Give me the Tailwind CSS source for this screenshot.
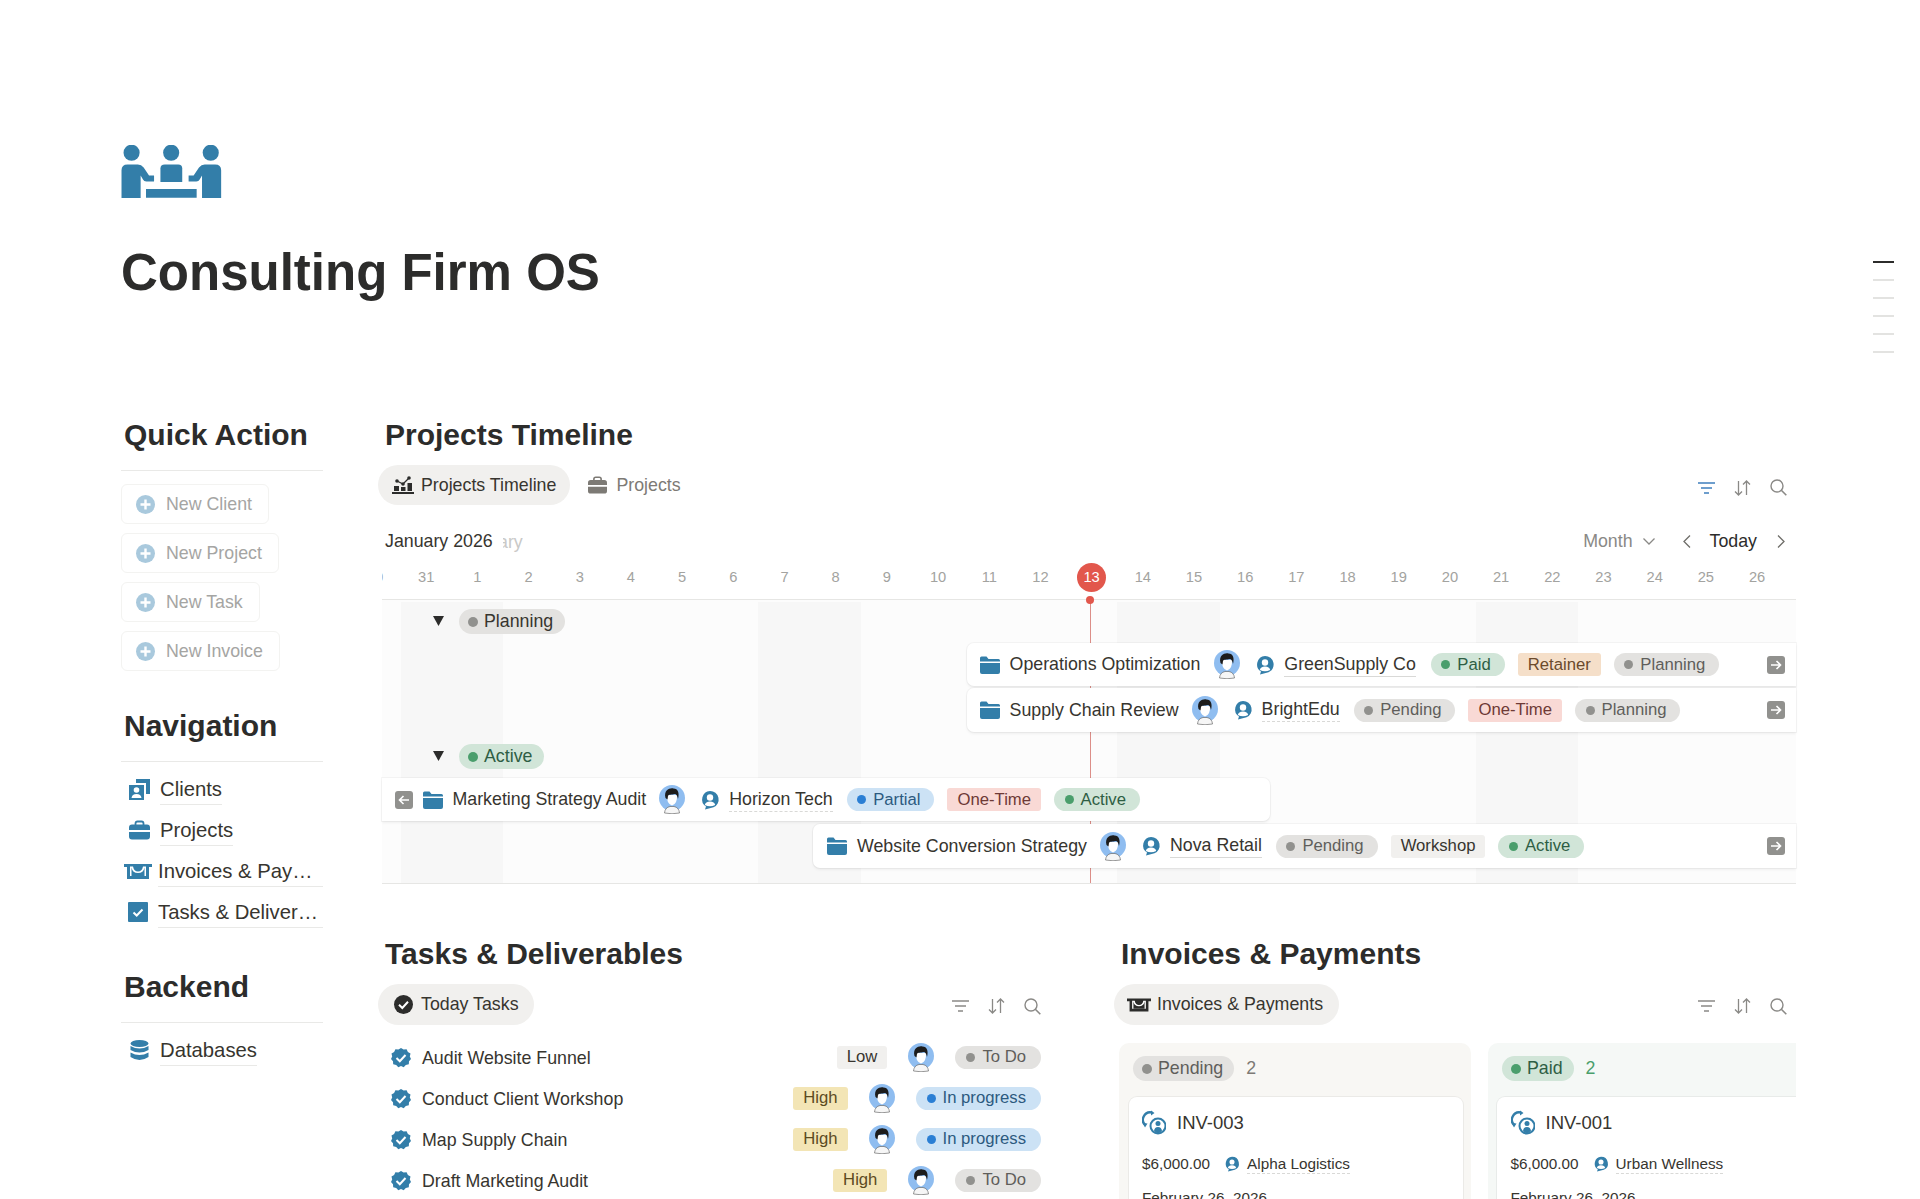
<!DOCTYPE html>
<html lang="en">
<head>
    <meta charset="utf-8">
    <title>Consulting Firm OS</title>
    <script src="https://cdn.jsdelivr.net/npm/@tailwindcss/browser@4"></script>
</head>
<body class="w-[1920px] h-[1199px] overflow-hidden relative bg-white text-[#2c2c2b] font-['Liberation_Sans',Arial,sans-serif]">
    <!-- shared icons -->
    <svg class="hidden">
        <defs>
            <symbol id="avatar" viewBox="0 0 26 29">
                <circle cx="13" cy="13" r="13" fill="#8fbdf0"/>
                <path d="M8 10 Q7.500 19 13 20.500 Q18.500 19 18 10Z" fill="#fff"/>
                <path d="M6.500 13 C4.500 5 11 2.500 14.500 3.500 C19 3.500 20.500 8 19 14 C18.500 11 17.500 9 15.500 9 C12.500 10 9.500 9 9 11 L8.500 14.500 Z" fill="#1c1c1c"/>
                <path d="M5.500 28 Q6 22.500 11 21.500 L15 21.500 Q20 22.500 20.500 28 Q13 29.500 5.500 28Z" fill="#f6f6f6" stroke="#555" stroke-width=".6"/>
            </symbol>
            <symbol id="person" viewBox="0 0 20 20">
                <path d="M10 1 A8.500 8.500 0 0 1 13.500 17.300 L5 19.500 L6 16.600 A8.500 8.500 0 0 1 10 1Z" fill="currentColor"/>
                <circle cx="10" cy="7.500" r="3.200" fill="#fff"/>
                <path d="M4.800 15 Q5.500 11.500 10 11.500 Q14.500 11.500 15.200 15 Q10 17.500 4.800 15Z" fill="#fff"/>
            </symbol>
            <symbol id="folder" viewBox="0 0 20 18">
                <path d="M0 2 Q0 .500 1.500 .500 H6.500 L8.500 3 H18.500 Q20 3 20 4.500 V5.500 H0Z" fill="currentColor"/>
                <path d="M0 7 H20 V16 Q20 18 18 18 H2 Q0 18 0 16Z" fill="currentColor"/>
            </symbol>
            <symbol id="arrow-right" viewBox="0 0 18 18">
                <rect width="18" height="18" rx="3" fill="#91918e"/>
                <path d="M4 9 H13 M9.500 5 L13.500 9 L9.500 13" fill="none" stroke="#fff" stroke-width="1.600"/>
            </symbol>
            <symbol id="arrow-left" viewBox="0 0 18 18">
                <rect width="18" height="18" rx="3" fill="#91918e"/>
                <path d="M14 9 H5 M8.500 5 L4.500 9 L8.500 13" fill="none" stroke="#fff" stroke-width="1.600"/>
            </symbol>
            <symbol id="filter" viewBox="0 0 17 12">
                <path d="M0 1 H17 M3 6 H14 M6 11 H11" fill="none" stroke="currentColor" stroke-width="1.600"/>
            </symbol>
            <symbol id="sort" viewBox="0 0 17 16">
                <path d="M4.500 1 V15 M1 11.500 L4.500 15 L8 11.500 M12.500 15 V1 M9 4.500 L12.500 1 L16 4.500" fill="none" stroke="currentColor" stroke-width="1.300"/>
            </symbol>
            <symbol id="search" viewBox="0 0 17 17">
                <circle cx="7" cy="7" r="6" fill="none" stroke="currentColor" stroke-width="1.400"/>
                <path d="M11.300 11.300 L16.300 16.300" stroke="currentColor" stroke-width="1.600"/>
            </symbol>
            <symbol id="plus" viewBox="0 0 19 19">
                <circle cx="9.500" cy="9.500" r="9.500" fill="#a9c9dd"/>
                <path d="M9.500 4.500 V14.500 M4.500 9.500 H14.500" stroke="#fff" stroke-width="2.400"/>
            </symbol>
            <symbol id="briefcase" viewBox="0 0 21 19">
                <path d="M6.500 5 V3 Q6.500 1 8.500 1 H12.500 Q14.500 1 14.500 3 V5" fill="none" stroke="currentColor" stroke-width="1.800"/>
                <path d="M0 7 Q0 4 3 4 H18 Q21 4 21 7 V9.500 H0Z M0 11.500 H21 V16 Q21 19 18 19 H3 Q0 19 0 16Z" fill="currentColor"/>
            </symbol>
            <symbol id="badge" viewBox="0 0 20 20">
                <path d="M10 0 L12.600 1.600 L15.600 1.300 L16.900 4 L19.500 5.500 L18.800 8.500 L20 11 L18 13.300 L17.800 16.300 L14.800 16.900 L12.700 19.200 L10 18 L7.300 19.200 L5.200 16.900 L2.200 16.300 L2 13.300 L0 11 L1.200 8.500 L.500 5.500 L3.100 4 L4.400 1.300 L7.400 1.600Z" fill="#337ea9"/>
                <path d="M5.500 10 L8.800 13.200 L14.500 7" fill="none" stroke="#fff" stroke-width="2"/>
            </symbol>
            <symbol id="invoice-cycle" viewBox="0 0 24 26">
                <path d="M10 2.500 A7.500 7.500 0 0 0 3.500 15.500" fill="none" stroke="currentColor" stroke-width="2.400"/>
                <path d="M9 .500 L12.500 3 L9 5.500Z M1 13 L5.500 13.500 L3 17.500Z" fill="currentColor"/>
                <circle cx="16" cy="16" r="7.500" fill="none" stroke="currentColor" stroke-width="2"/>
                <circle cx="16" cy="13.500" r="2.500" fill="currentColor"/>
                <path d="M12 21 Q12.500 17 16 17 Q19.500 17 20 21 L16 24Z" fill="currentColor"/>
            </symbol>
            <symbol id="tray" viewBox="0 0 28 15">
                <path d="M0 0 H28 V3 H25 V15 H3 V3 H0Z" fill="currentColor"/>
                <path d="M6 2.500 H9 Q10 7.500 14 7.500 Q18 7.500 19 2.500 H22 V12 H6Z" fill="#fff"/>
                <path d="M9.800 2.500 H18.200 Q17.500 6.500 14 6.500 Q10.500 6.500 9.800 2.500Z M7.500 3.500 V12 H20.500 V3.500 Q19.500 9 14 9 Q8.500 9 7.500 3.500Z" fill="currentColor"/>
            </symbol>
        </defs>
    </svg>

    <!-- page outline on the right -->
    <div class="absolute left-[1873px] top-[261px] flex flex-col gap-[16px]">
        <div class="w-[21px] h-[2px] bg-[#2c2c2b]"></div>
        <div class="w-[21px] h-[2px] bg-[#e3e3e1]"></div>
        <div class="w-[21px] h-[2px] bg-[#e3e3e1]"></div>
        <div class="w-[21px] h-[2px] bg-[#e3e3e1]"></div>
        <div class="w-[21px] h-[2px] bg-[#e3e3e1]"></div>
        <div class="w-[21px] h-[2px] bg-[#e3e3e1]"></div>
    </div>

    <div class="pl-[121px] pt-[145px]">
        <!-- logo -->
        <svg class="w-[101px] h-[53px] text-[#337ea9] block" viewBox="35 45 300 158" fill="currentColor">
            <circle cx="66" cy="68" r="24"/>
            <circle cx="184" cy="68" r="24"/>
            <circle cx="302" cy="68" r="24"/>
            <path d="M36 203 V120 Q36 103 54 103 H85 Q95 103 102 112 L118 136 H133 V154 H110 Q103 154 100 148 L93 136 V203Z"/>
            <path d="M152 155 V115 Q152 103 165 103 H205 Q217 103 217 115 V155Z"/>
            <path d="M109 176 H260 V202 H109Z"/>
            <path d="M333 203 V120 Q333 103 315 103 H284 Q274 103 267 112 L251 136 H236 V154 H259 Q266 154 269 148 L276 136 V203Z"/>
        </svg>
        <h1 class="mt-[44.500px] h-[60px] leading-[60px] text-[51px] font-bold text-[#2c2c2b]">Consulting Firm OS</h1>

        <div class="mt-[112.500px] flex">
            <!-- side column -->
            <div class="w-[202px] shrink-0">
                <h3 class="h-[56px] pl-[3px] leading-[40px] text-[30px] font-bold border-b border-[#e9e9e7]">Quick Action</h3>
                <div class="mt-[13px] flex flex-col items-start gap-[9px] text-[17.800px] text-[#a5a5a3]">
                    <div class="h-[40px] flex items-center pl-[14px] pr-[16px] border border-[#f3f3f1] rounded-[6px]"><svg class="w-[19px] h-[19px] mr-[11px]"><use href="#plus"/></svg>New Client</div>
                    <div class="h-[40px] flex items-center pl-[14px] pr-[16px] border border-[#f3f3f1] rounded-[6px]"><svg class="w-[19px] h-[19px] mr-[11px]"><use href="#plus"/></svg>New Project</div>
                    <div class="h-[40px] flex items-center pl-[14px] pr-[16px] border border-[#f3f3f1] rounded-[6px]"><svg class="w-[19px] h-[19px] mr-[11px]"><use href="#plus"/></svg>New Task</div>
                    <div class="h-[40px] flex items-center pl-[14px] pr-[16px] border border-[#f3f3f1] rounded-[6px]"><svg class="w-[19px] h-[19px] mr-[11px]"><use href="#plus"/></svg>New Invoice</div>
                </div>

                <h3 class="mt-[35px] h-[56px] pl-[3px] leading-[40px] text-[30px] font-bold border-b border-[#e9e9e7]">Navigation</h3>
                <div class="mt-[6.500px] text-[20.300px] text-[#37352f]">
                    <div class="h-[41px] flex items-center pl-[8px]">
                        <svg class="w-[21px] h-[21px] mr-[10px] text-[#337ea9]" viewBox="0 0 21 21" fill="currentColor"><path d="M7 0 H21 V15 H17 V4 H7Z"/><path d="M0 6 H15 V21 H0Z"/><circle cx="7.500" cy="11" r="2.800" fill="#fff"/><path d="M2.500 19 Q3 15 7.500 15 Q12 15 12.500 19Z" fill="#fff"/></svg>
                        <span class="h-[31px] leading-[30px] border-b border-[#e9e9e7]">Clients</span>
                    </div>
                    <div class="h-[41px] flex items-center pl-[8px]">
                        <svg class="w-[21px] h-[20px] mr-[10px] text-[#337ea9]"><use href="#briefcase"/></svg>
                        <span class="h-[31px] leading-[30px] border-b border-[#e9e9e7]">Projects</span>
                    </div>
                    <div class="h-[41px] flex items-center pl-[3px]">
                        <svg class="w-[28px] h-[15px] mr-[6px] text-[#337ea9]"><use href="#tray"/></svg>
                        <span class="flex-1 h-[31px] leading-[30px] border-b border-[#e9e9e7] whitespace-nowrap">Invoices &amp; Pay…</span>
                    </div>
                    <div class="h-[41px] flex items-center pl-[7px]">
                        <svg class="w-[20px] h-[20px] mr-[10px]" viewBox="0 0 20 20"><rect width="20" height="20" rx="1" fill="#337ea9"/><path d="M5.500 10.500 L8.700 13.500 L14.500 7.500" fill="none" stroke="#fff" stroke-width="2"/></svg>
                        <span class="flex-1 h-[31px] leading-[30px] border-b border-[#e9e9e7] whitespace-nowrap">Tasks &amp; Deliver…</span>
                    </div>
                </div>

                <h3 class="mt-[34.500px] h-[56px] pl-[3px] leading-[40px] text-[30px] font-bold border-b border-[#e9e9e7]">Backend</h3>
                <div class="mt-[6.500px] text-[20.300px] text-[#37352f]">
                    <div class="h-[41px] flex items-center pl-[9px]">
                        <svg class="w-[19px] h-[21px] mr-[11px] text-[#337ea9]" viewBox="0 0 19 21" fill="currentColor"><ellipse cx="9.500" cy="3.500" rx="9" ry="3.500"/><path d="M.500 6 Q9.500 11 18.500 6 V10 Q9.500 15 .500 10Z"/><path d="M.500 12.500 Q9.500 17.500 18.500 12.500 V17 Q9.500 23 .500 17Z"/></svg>
                        <span class="h-[31px] leading-[30px] border-b border-[#e9e9e7]">Databases</span>
                    </div>
                </div>
            </div>

            <!-- main column -->
            <div class="ml-[55px] w-[1418px] shrink-0">
                <h3 class="h-[40px] pl-[7px] leading-[40px] text-[30px] font-bold">Projects Timeline</h3>

                <!-- tabs -->
                <div class="mt-[10px] h-[40px] flex items-center text-[17.800px]">
                    <div class="h-[40px] px-[14px] flex items-center rounded-full bg-[#f1f0ee] text-[#37352f]">
                        <svg class="w-[22px] h-[18px] mr-[7px]" viewBox="0 0 22 18" fill="#2c2c2b"><circle cx="5" cy="5" r="1.800"/><circle cx="11" cy="8" r="1.800"/><circle cx="17" cy="2" r="1.800"/><path d="M5 5 L11 8 L17 2" fill="none" stroke="#2c2c2b" stroke-width="1.300"/><path d="M0 16 H22 V18 H0Z M2 10 H7 V15 H2Z M9 11 H13.500 V15 H9Z M15.500 7 H20 V15 H15.500Z"/></svg>
                        Projects Timeline
                    </div>
                    <div class="ml-[18px] flex items-center text-[#7d7a75]">
                        <svg class="w-[19px] h-[18px] mr-[9px]"><use href="#briefcase"/></svg>
                        Projects
                    </div>
                    <div class="ml-auto mr-[9px] mt-[5px] flex items-center gap-[19px] text-[#8a8986]">
                        <svg class="w-[17px] h-[12px] text-[#3f7fbd]"><use href="#filter"/></svg>
                        <svg class="w-[17px] h-[16px]"><use href="#sort"/></svg>
                        <svg class="w-[17px] h-[17px]"><use href="#search"/></svg>
                    </div>
                </div>

                <!-- month controls -->
                <div class="mt-[24px] h-[24px] flex items-center pl-[7px] pr-[11px] text-[17.800px]">
                    <span class="text-[#37352f]">January 2026</span>
                    <span class="ml-[10px] mt-[2px] w-[20px] overflow-hidden flex justify-end text-[#c9c9c7]">ary</span>
                    <span class="ml-auto text-[#8a8986]">Month</span>
                    <svg class="ml-[10px] w-[12px] h-[7px] text-[#8a8986]" viewBox="0 0 12 7"><path d="M.500 .500 L6 6 L11.500 .500" fill="none" stroke="currentColor" stroke-width="1.300"/></svg>
                    <svg class="ml-[28px] w-[8px] h-[13px] text-[#6f6e69]" viewBox="0 0 8 13"><path d="M7 .500 L1 6.500 L7 12.500" fill="none" stroke="currentColor" stroke-width="1.300"/></svg>
                    <span class="ml-[19px] text-[#2c2c2b]">Today</span>
                    <svg class="ml-[20px] w-[8px] h-[13px] text-[#6f6e69]" viewBox="0 0 8 13"><path d="M1 .500 L7 6.500 L1 12.500" fill="none" stroke="currentColor" stroke-width="1.300"/></svg>
                </div>

                <!-- day numbers -->
                <div class="ml-[4px] w-[1414px] h-[47px] overflow-hidden border-b border-[#e6e6e4]">
                    <div class="ml-[-32.600px] flex items-center h-[48px] text-[14.700px] text-[#a3a3a0]">
                        <div class="w-[51.200px] shrink-0 text-center">30</div>
                        <div class="w-[51.200px] shrink-0 text-center">31</div>
                        <div class="w-[51.200px] shrink-0 text-center">1</div>
                        <div class="w-[51.200px] shrink-0 text-center">2</div>
                        <div class="w-[51.200px] shrink-0 text-center">3</div>
                        <div class="w-[51.200px] shrink-0 text-center">4</div>
                        <div class="w-[51.200px] shrink-0 text-center">5</div>
                        <div class="w-[51.200px] shrink-0 text-center">6</div>
                        <div class="w-[51.200px] shrink-0 text-center">7</div>
                        <div class="w-[51.200px] shrink-0 text-center">8</div>
                        <div class="w-[51.200px] shrink-0 text-center">9</div>
                        <div class="w-[51.200px] shrink-0 text-center">10</div>
                        <div class="w-[51.200px] shrink-0 text-center">11</div>
                        <div class="w-[51.200px] shrink-0 text-center">12</div>
                        <div class="w-[51.200px] shrink-0 flex justify-center"><span class="w-[29px] h-[29px] rounded-full bg-[#e2574c] text-white flex items-center justify-center">13</span></div>
                        <div class="w-[51.200px] shrink-0 text-center">14</div>
                        <div class="w-[51.200px] shrink-0 text-center">15</div>
                        <div class="w-[51.200px] shrink-0 text-center">16</div>
                        <div class="w-[51.200px] shrink-0 text-center">17</div>
                        <div class="w-[51.200px] shrink-0 text-center">18</div>
                        <div class="w-[51.200px] shrink-0 text-center">19</div>
                        <div class="w-[51.200px] shrink-0 text-center">20</div>
                        <div class="w-[51.200px] shrink-0 text-center">21</div>
                        <div class="w-[51.200px] shrink-0 text-center">22</div>
                        <div class="w-[51.200px] shrink-0 text-center">23</div>
                        <div class="w-[51.200px] shrink-0 text-center">24</div>
                        <div class="w-[51.200px] shrink-0 text-center">25</div>
                        <div class="w-[51.200px] shrink-0 text-center">26</div>
                    </div>
                </div>

                <!-- timeline board -->
                <div class="relative ml-[4px] w-[1414px] h-[284px] pt-[9px] bg-[#fcfcfc] border-b border-[#e6e6e4] text-[17.800px] text-[#37352f]">
                    <div class="absolute top-[2px] bottom-0 left-[19px] w-[102px] bg-[#f7f7f7]"></div>
                    <div class="absolute top-[2px] bottom-0 left-[376px] w-[103px] bg-[#f7f7f7]"></div>
                    <div class="absolute top-[2px] bottom-0 left-[735px] w-[103px] bg-[#f7f7f7]"></div>
                    <div class="absolute top-[2px] bottom-0 left-[1094px] w-[102px] bg-[#f7f7f7]"></div>
                    <div class="absolute top-0 bottom-0 left-[707.500px] w-[1.500px] bg-[#dc8e88]"></div>
                    <div class="absolute top-[-4px] left-[704px] w-[8px] h-[8px] rounded-full bg-[#e2574c]"></div>

                    <div class="relative">
                        <div class="h-[25px] flex items-center pl-[51px]">
                            <svg class="w-[11px] h-[10px] mr-[15px] -mt-[2px]" viewBox="0 0 11 10"><path d="M0 0 H11 L5.500 10Z" fill="#2c2c2b"/></svg>
                            <span class="h-[25px] flex items-center pl-[9px] pr-[12px] rounded-full bg-[#e3e2e0]"><span class="w-[10px] h-[10px] rounded-full bg-[#91918e] mr-[6px]"></span>Planning</span>
                        </div>

                        <div class="mt-[9px] ml-[584.600px] h-[43px] flex items-center pl-[13px] bg-white rounded-l-[7px] shadow-[0_0_0_1px_rgba(0,0,0,0.035),0_2px_3px_rgba(0,0,0,0.05)]">
                            <svg class="w-[20px] h-[18px] mr-[10px] text-[#337ea9]"><use href="#folder"/></svg>
                            <span>Operations Optimization</span>
                            <svg class="ml-[14px] w-[26px] h-[29px]"><use href="#avatar"/></svg>
                            <svg class="ml-[15px] mr-[9px] w-[20px] h-[20px] text-[#337ea9]"><use href="#person"/></svg>
                            <span class="border-b border-[#d9d9d7] leading-[23px]">GreenSupply Co</span>
                            <div class="ml-[15px] flex items-center gap-[13px] text-[16.700px]">
                                <span class="h-[23px] flex items-center pl-[10.500px] pr-[14px] rounded-full bg-[#d1e5d8] text-[#2e5e44]"><span class="w-[9px] h-[9px] rounded-full bg-[#4a9e6c] mr-[7px]"></span>Paid</span>
                                <span class="h-[23px] flex items-center px-[10px] rounded-[3px] bg-[#f5dfc9] text-[#6b4a2c]">Retainer</span>
                                <span class="h-[23px] flex items-center pl-[10.500px] pr-[14px] rounded-full bg-[#e3e2e0] text-[#5f5e5b]"><span class="w-[9px] h-[9px] rounded-full bg-[#91918e] mr-[7px]"></span>Planning</span>
                            </div>
                            <svg class="ml-auto mr-[11px] w-[18px] h-[18px]"><use href="#arrow-right"/></svg>
                        </div>

                        <div class="mt-[2px] ml-[584.600px] h-[44px] flex items-center pl-[13px] bg-white rounded-l-[7px] shadow-[0_0_0_1px_rgba(0,0,0,0.035),0_2px_3px_rgba(0,0,0,0.05)]">
                            <svg class="w-[20px] h-[18px] mr-[10px] text-[#337ea9]"><use href="#folder"/></svg>
                            <span>Supply Chain Review</span>
                            <svg class="ml-[13px] w-[26px] h-[29px]"><use href="#avatar"/></svg>
                            <svg class="ml-[15px] mr-[9px] w-[20px] h-[20px] text-[#337ea9]"><use href="#person"/></svg>
                            <span class="border-b border-dashed border-[#d9d9d7] leading-[23px]">BrightEdu</span>
                            <div class="ml-[14px] flex items-center gap-[13px] text-[16.700px]">
                                <span class="h-[23px] flex items-center pl-[10.500px] pr-[14px] rounded-full bg-[#e3e2e0] text-[#5f5e5b]"><span class="w-[9px] h-[9px] rounded-full bg-[#91918e] mr-[7px]"></span>Pending</span>
                                <span class="h-[23px] flex items-center px-[10px] rounded-[3px] bg-[#f9d9d5] text-[#6e3a36]">One-Time</span>
                                <span class="h-[23px] flex items-center pl-[10.500px] pr-[14px] rounded-full bg-[#e3e2e0] text-[#5f5e5b]"><span class="w-[9px] h-[9px] rounded-full bg-[#91918e] mr-[7px]"></span>Planning</span>
                            </div>
                            <svg class="ml-auto mr-[11px] w-[18px] h-[18px]"><use href="#arrow-right"/></svg>
                        </div>

                        <div class="mt-[12px] h-[25px] flex items-center pl-[51px]">
                            <svg class="w-[11px] h-[10px] mr-[15px] -mt-[2px]" viewBox="0 0 11 10"><path d="M0 0 H11 L5.500 10Z" fill="#2c2c2b"/></svg>
                            <span class="h-[25px] flex items-center pl-[9px] pr-[12px] rounded-full bg-[#d1e5d8] text-[#2e5e44]"><span class="w-[10px] h-[10px] rounded-full bg-[#4a9e6c] mr-[6px]"></span>Active</span>
                        </div>

                        <div class="mt-[9px] w-[888px] h-[43px] flex items-center pl-[12.500px] bg-white rounded-r-[7px] shadow-[0_0_0_1px_rgba(0,0,0,0.035),0_2px_3px_rgba(0,0,0,0.05)]">
                            <svg class="w-[18px] h-[18px] mr-[10px]"><use href="#arrow-left"/></svg>
                            <svg class="w-[20px] h-[18px] mr-[10px] text-[#337ea9]"><use href="#folder"/></svg>
                            <span>Marketing Strategy Audit</span>
                            <svg class="ml-[13px] w-[26px] h-[29px]"><use href="#avatar"/></svg>
                            <svg class="ml-[15px] mr-[9px] w-[20px] h-[20px] text-[#337ea9]"><use href="#person"/></svg>
                            <span class="border-b border-dashed border-[#d9d9d7] leading-[23px]">Horizon Tech</span>
                            <div class="ml-[14px] flex items-center gap-[13px] text-[16.700px]">
                                <span class="h-[23px] flex items-center pl-[10.500px] pr-[14px] rounded-full bg-[#cce2f5] text-[#2c5a80]"><span class="w-[9px] h-[9px] rounded-full bg-[#2b7fd4] mr-[7px]"></span>Partial</span>
                                <span class="h-[23px] flex items-center px-[10px] rounded-[3px] bg-[#f9d9d5] text-[#6e3a36]">One-Time</span>
                                <span class="h-[23px] flex items-center pl-[10.500px] pr-[14px] rounded-full bg-[#d1e5d8] text-[#2e5e44]"><span class="w-[9px] h-[9px] rounded-full bg-[#4a9e6c] mr-[7px]"></span>Active</span>
                            </div>
                        </div>

                        <div class="mt-[3px] ml-[431px] h-[44px] flex items-center pl-[14px] bg-white rounded-l-[7px] shadow-[0_0_0_1px_rgba(0,0,0,0.035),0_2px_3px_rgba(0,0,0,0.05)]">
                            <svg class="w-[20px] h-[18px] mr-[10px] text-[#337ea9]"><use href="#folder"/></svg>
                            <span>Website Conversion Strategy</span>
                            <svg class="ml-[13px] w-[26px] h-[29px]"><use href="#avatar"/></svg>
                            <svg class="ml-[15px] mr-[9px] w-[20px] h-[20px] text-[#337ea9]"><use href="#person"/></svg>
                            <span class="border-b border-[#d9d9d7] leading-[23px]">Nova Retail</span>
                            <div class="ml-[14px] flex items-center gap-[13px] text-[16.700px]">
                                <span class="h-[23px] flex items-center pl-[10.500px] pr-[14px] rounded-full bg-[#e3e2e0] text-[#5f5e5b]"><span class="w-[9px] h-[9px] rounded-full bg-[#91918e] mr-[7px]"></span>Pending</span>
                                <span class="h-[23px] flex items-center px-[10px] rounded-[3px] bg-[#f1f0ee] text-[#37352f]">Workshop</span>
                                <span class="h-[23px] flex items-center pl-[10.500px] pr-[14px] rounded-full bg-[#d1e5d8] text-[#2e5e44]"><span class="w-[9px] h-[9px] rounded-full bg-[#4a9e6c] mr-[7px]"></span>Active</span>
                            </div>
                            <svg class="ml-auto mr-[11px] w-[18px] h-[18px]"><use href="#arrow-right"/></svg>
                        </div>
                    </div>
                </div>

                <!-- lower databases -->
                <div class="mt-[50px] flex">
                    <div class="w-[736px] shrink-0 pr-[73px]">
                        <h3 class="h-[40px] pl-[7px] leading-[40px] text-[30px] font-bold">Tasks &amp; Deliverables</h3>
                        <div class="mt-[10px] h-[41px] flex items-center text-[17.800px]">
                            <div class="h-[41px] pl-[16px] pr-[15px] flex items-center rounded-full bg-[#f1f0ee] text-[#37352f]">
                                <svg class="w-[19px] h-[19px] mr-[8px]" viewBox="0 0 19 19"><circle cx="9.500" cy="9.500" r="9.500" fill="#2c2c2b"/><path d="M5 9.800 L8.300 13 L14 6.800" fill="none" stroke="#fff" stroke-width="2"/></svg>
                                Today Tasks
                            </div>
                            <div class="ml-auto mt-[3px] flex items-center gap-[19px] text-[#8a8986]">
                                <svg class="w-[17px] h-[12px]"><use href="#filter"/></svg>
                                <svg class="w-[17px] h-[16px]"><use href="#sort"/></svg>
                                <svg class="w-[17px] h-[17px]"><use href="#search"/></svg>
                            </div>
                        </div>
                        <div class="mt-[12.500px] text-[17.800px] text-[#37352f]">
                            <div class="h-[41px] flex items-center pl-[13px]">
                                <svg class="w-[20px] h-[20px] mr-[11px]"><use href="#badge"/></svg>
                                <span>Audit Website Funnel</span>
                                <div class="ml-auto -mt-[2px] flex items-center gap-[21px] text-[16.700px]">
                                    <span class="h-[23px] flex items-center px-[10px] rounded-[3px] bg-[#f1f0ee]">Low</span>
                                    <svg class="w-[26px] h-[29px]"><use href="#avatar"/></svg>
                                    <span class="h-[23px] flex items-center pl-[11px] pr-[15px] rounded-full bg-[#e3e2e0] text-[#5f5e5b]"><span class="w-[9px] h-[9px] rounded-full bg-[#91918e] mr-[7px]"></span>To Do</span>
                                </div>
                            </div>
                            <div class="h-[41px] flex items-center pl-[13px]">
                                <svg class="w-[20px] h-[20px] mr-[11px]"><use href="#badge"/></svg>
                                <span>Conduct Client Workshop</span>
                                <div class="ml-auto -mt-[2px] flex items-center gap-[21px] text-[16.700px]">
                                    <span class="h-[23px] flex items-center px-[10px] rounded-[3px] bg-[#f3e5b5] text-[#5c4a1e]">High</span>
                                    <svg class="w-[26px] h-[29px]"><use href="#avatar"/></svg>
                                    <span class="h-[23px] flex items-center pl-[11px] pr-[15px] rounded-full bg-[#cce2f5] text-[#2c5a80]"><span class="w-[9px] h-[9px] rounded-full bg-[#2b7fd4] mr-[7px]"></span>In progress</span>
                                </div>
                            </div>
                            <div class="h-[41px] flex items-center pl-[13px]">
                                <svg class="w-[20px] h-[20px] mr-[11px]"><use href="#badge"/></svg>
                                <span>Map Supply Chain</span>
                                <div class="ml-auto -mt-[2px] flex items-center gap-[21px] text-[16.700px]">
                                    <span class="h-[23px] flex items-center px-[10px] rounded-[3px] bg-[#f3e5b5] text-[#5c4a1e]">High</span>
                                    <svg class="w-[26px] h-[29px]"><use href="#avatar"/></svg>
                                    <span class="h-[23px] flex items-center pl-[11px] pr-[15px] rounded-full bg-[#cce2f5] text-[#2c5a80]"><span class="w-[9px] h-[9px] rounded-full bg-[#2b7fd4] mr-[7px]"></span>In progress</span>
                                </div>
                            </div>
                            <div class="h-[41px] flex items-center pl-[13px]">
                                <svg class="w-[20px] h-[20px] mr-[11px]"><use href="#badge"/></svg>
                                <span>Draft Marketing Audit</span>
                                <div class="ml-auto -mt-[2px] flex items-center gap-[21px] text-[16.700px]">
                                    <span class="h-[23px] flex items-center px-[10px] rounded-[3px] bg-[#f3e5b5] text-[#5c4a1e]">High</span>
                                    <svg class="w-[26px] h-[29px]"><use href="#avatar"/></svg>
                                    <span class="h-[23px] flex items-center pl-[11px] pr-[15px] rounded-full bg-[#e3e2e0] text-[#5f5e5b]"><span class="w-[9px] h-[9px] rounded-full bg-[#91918e] mr-[7px]"></span>To Do</span>
                                </div>
                            </div>
                        </div>
                    </div>

                    <div class="w-[682px] shrink-0 overflow-hidden">
                        <h3 class="h-[40px] pl-[7px] leading-[40px] text-[30px] font-bold">Invoices &amp; Payments</h3>
                        <div class="mt-[10px] h-[41px] flex items-center text-[17.800px]">
                            <div class="h-[41px] pl-[13px] pr-[16px] flex items-center rounded-full bg-[#f1f0ee] text-[#37352f]">
                                <svg class="w-[24px] h-[14px] mr-[6px] text-[#2c2c2b]"><use href="#tray"/></svg>
                                Invoices &amp; Payments
                            </div>
                            <div class="ml-auto mr-[9px] mt-[3px] flex items-center gap-[19px] text-[#8a8986]">
                                <svg class="w-[17px] h-[12px]"><use href="#filter"/></svg>
                                <svg class="w-[17px] h-[16px]"><use href="#sort"/></svg>
                                <svg class="w-[17px] h-[17px]"><use href="#search"/></svg>
                            </div>
                        </div>
                        <div class="mt-[18px] ml-[5px] flex gap-[17px]">
                            <div class="w-[352px] shrink-0 pt-[13px] pl-[9.500px] rounded-t-[10px] bg-[#f8f7f4]">
                                <div class="h-[25px] flex items-center pl-[4.500px] text-[17.800px]">
                                    <span class="h-[25px] flex items-center pl-[9px] pr-[11px] rounded-full bg-[#e3e2e0] text-[#5f5e5b]"><span class="w-[10px] h-[10px] rounded-full bg-[#91918e] mr-[6px]"></span>Pending</span>
                                    <span class="ml-[12px] text-[#7d7a75]">2</span>
                                </div>
                                <div class="mt-[16px] w-[334.500px] h-[120px] pt-[14px] pl-[13.500px] bg-white rounded-t-[8px] shadow-[0_0_0_1px_rgba(0,0,0,0.05)]">
                                    <div class="h-[24px] flex items-center text-[18.500px] text-[#37352f]">
                                        <svg class="w-[24px] h-[26px] mr-[11px] text-[#337ea9]"><use href="#invoice-cycle"/></svg>INV-003
                                    </div>
                                    <div class="mt-[19px] h-[20px] flex items-center text-[15.300px] text-[#37352f]">
                                        <span>$6,000.00</span>
                                        <svg class="ml-[14px] mr-[7px] w-[16px] h-[16px] text-[#337ea9]"><use href="#person"/></svg>
                                        <span class="border-b border-dashed border-[#d9d9d7] leading-[19px]">Alpha Logistics</span>
                                    </div>
                                    <div class="mt-[14px] text-[15.300px] leading-[20px] text-[#37352f]">February 26, 2026</div>
                                </div>
                            </div>
                            <div class="w-[352px] shrink-0 pt-[13px] pl-[9px] rounded-t-[10px] bg-[#f5f8f6]">
                                <div class="h-[25px] flex items-center pl-[5px] text-[17.800px]">
                                    <span class="h-[25px] flex items-center pl-[9px] pr-[11px] rounded-full bg-[#d1e5d8] text-[#2e5e44]"><span class="w-[10px] h-[10px] rounded-full bg-[#4a9e6c] mr-[6px]"></span>Paid</span>
                                    <span class="ml-[12px] text-[#4a9e6c]">2</span>
                                </div>
                                <div class="mt-[16px] w-[334.500px] h-[120px] pt-[14px] pl-[13.500px] bg-white rounded-t-[8px] shadow-[0_0_0_1px_rgba(0,0,0,0.05)]">
                                    <div class="h-[24px] flex items-center text-[18.500px] text-[#37352f]">
                                        <svg class="w-[24px] h-[26px] mr-[11px] text-[#337ea9]"><use href="#invoice-cycle"/></svg>INV-001
                                    </div>
                                    <div class="mt-[19px] h-[20px] flex items-center text-[15.300px] text-[#37352f]">
                                        <span>$6,000.00</span>
                                        <svg class="ml-[14px] mr-[7px] w-[16px] h-[16px] text-[#337ea9]"><use href="#person"/></svg>
                                        <span class="border-b border-dashed border-[#d9d9d7] leading-[19px]">Urban Wellness</span>
                                    </div>
                                    <div class="mt-[14px] text-[15.300px] leading-[20px] text-[#37352f]">February 26, 2026</div>
                                </div>
                            </div>
                        </div>
                    </div>
                </div>
            </div>
        </div>
    </div>
</body>
</html>
